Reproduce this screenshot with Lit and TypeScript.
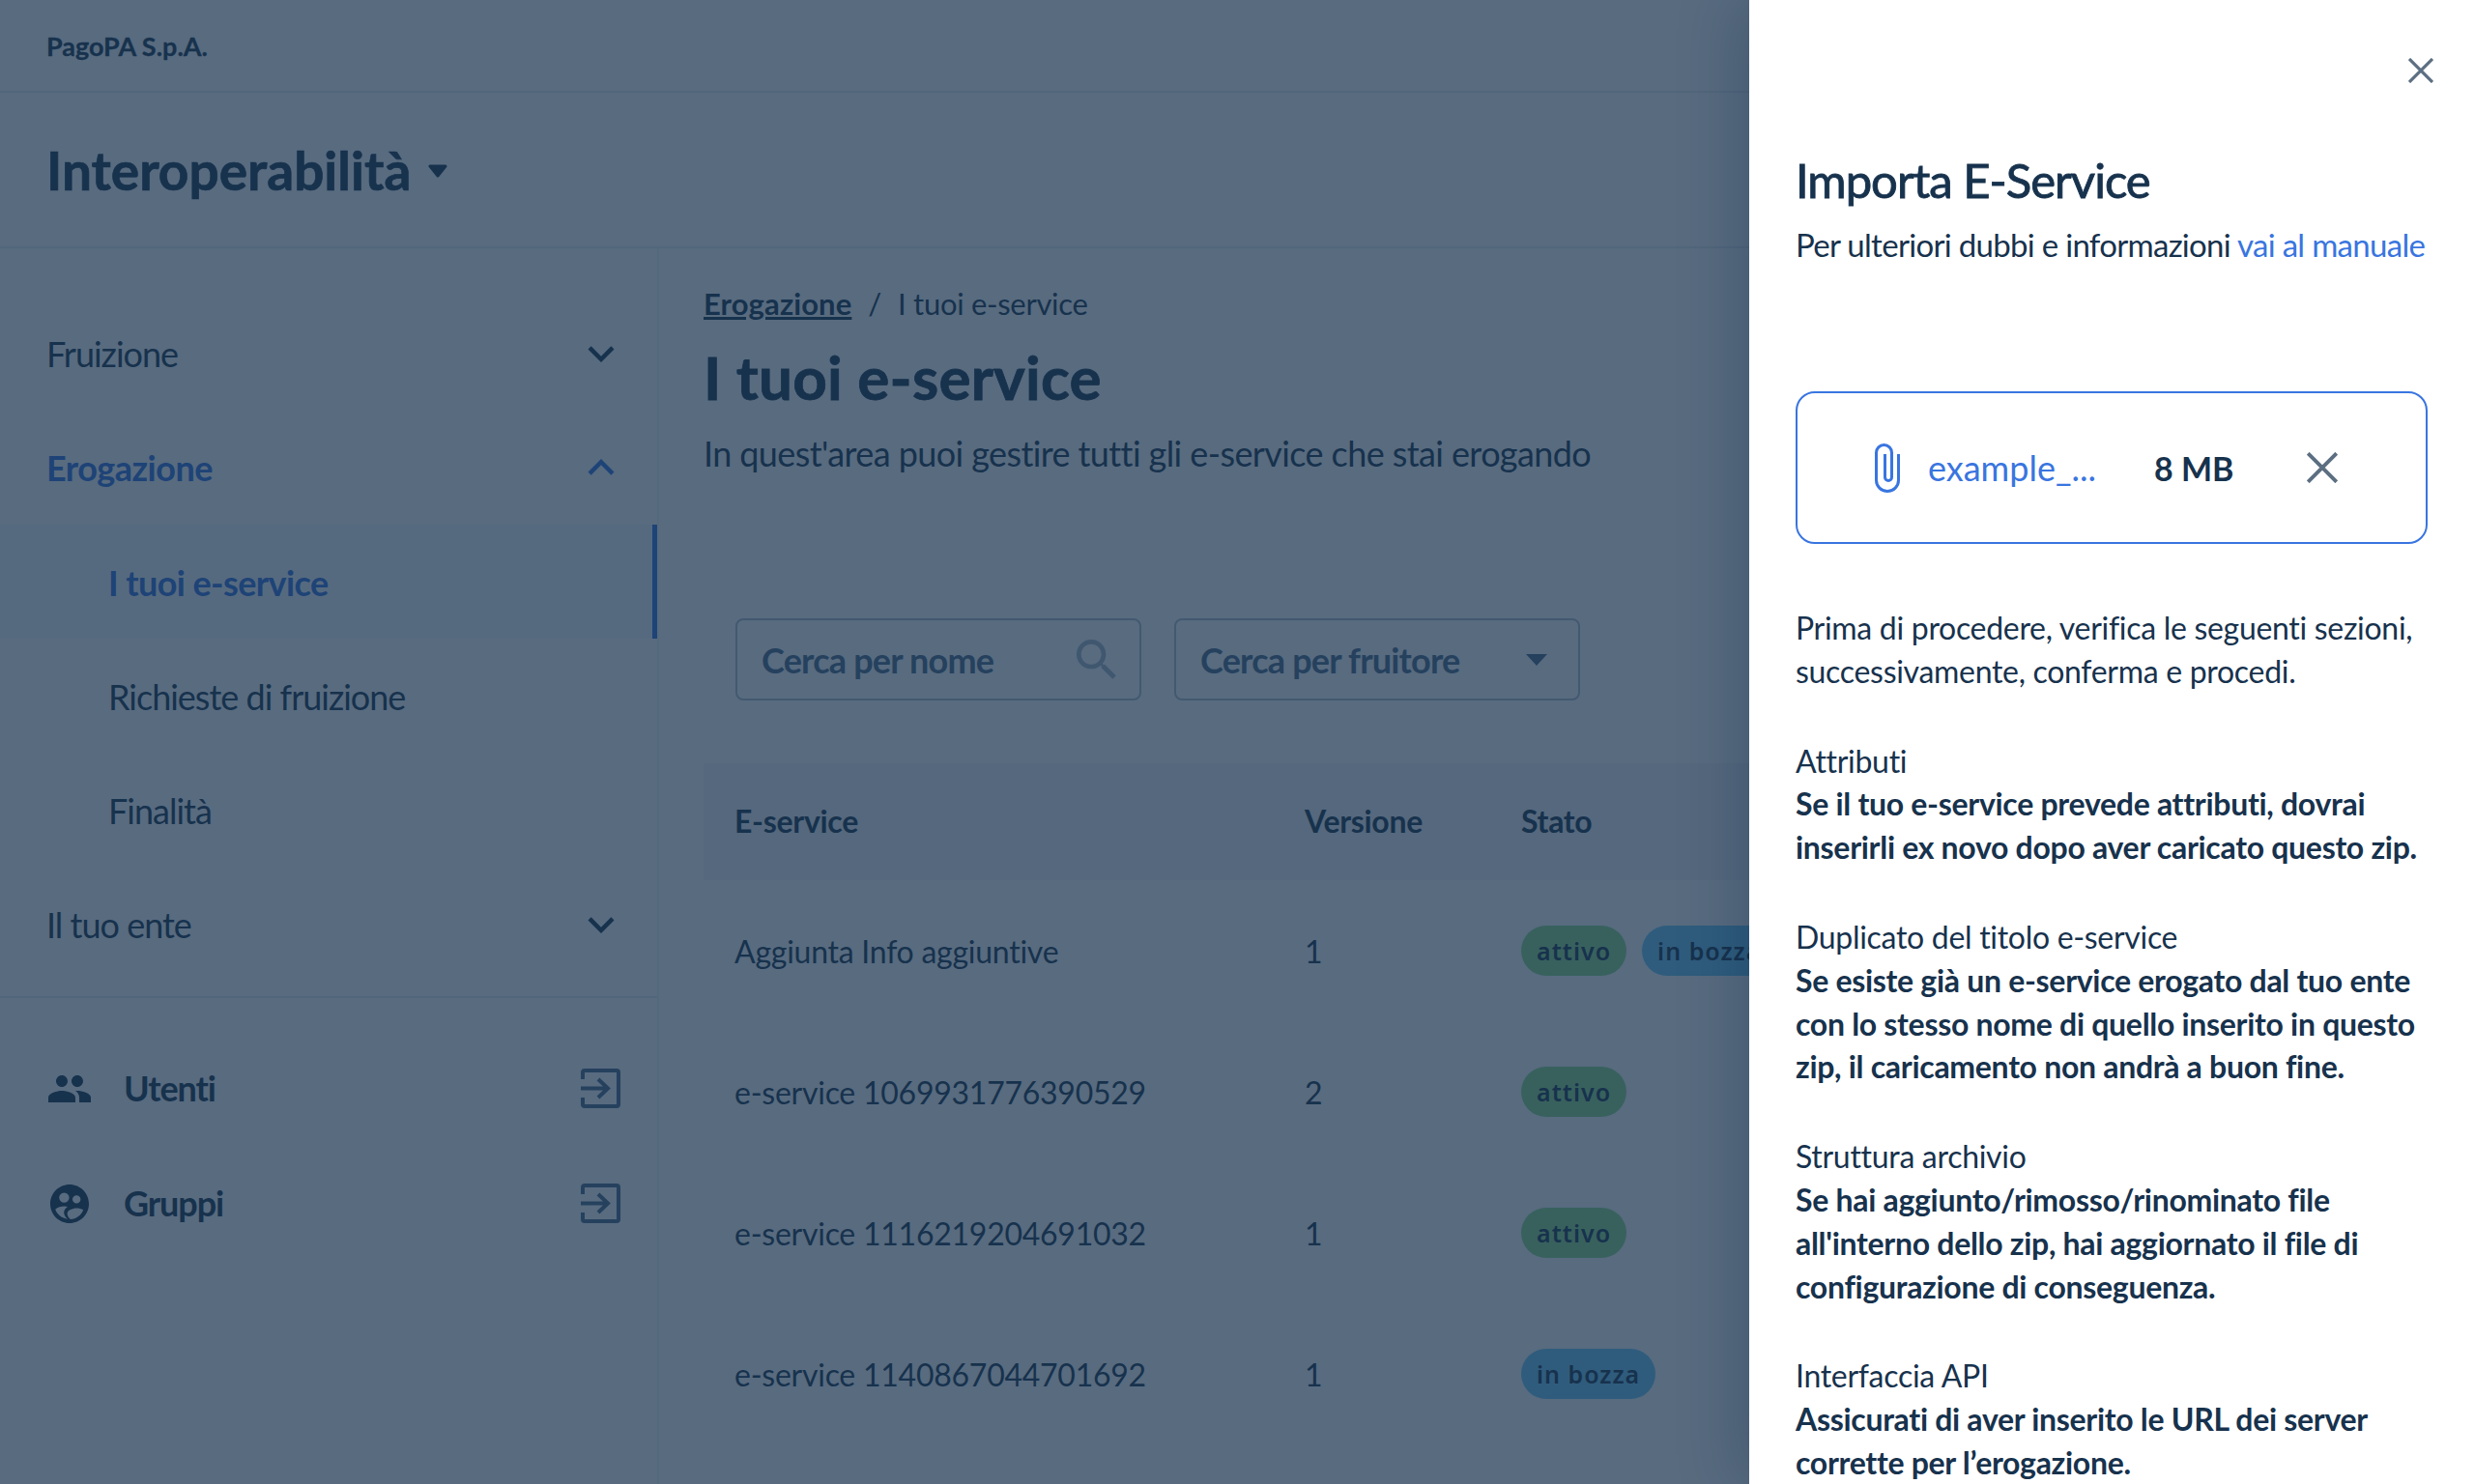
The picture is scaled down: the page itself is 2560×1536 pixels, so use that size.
import { LitElement, html, css } from "lit";
import { customElement } from "lit/decorators.js";

const chevron = (up: boolean) => html`<svg class="chev" viewBox="0 0 24 24"><path fill="currentColor" d=${up ? "M12 8l-6 6 1.41 1.41L12 10.83l4.59 4.58L18 14z" : "M16.59 8.59 12 13.17 7.41 8.59 6 10l6 6 6-6z"}></path></svg>`;
const exit = html`<svg class="exit" viewBox="0 0 41 41"><path fill="none" stroke="currentColor" stroke-width="4" d="M2 11V4q0-2 2-2h33q2 0 2 2v33q0 2-2 2H4q-2 0-2-2v-7M0 20.5h26M18 11l10 9.500L18 30"></path></svg>`;

@customElement("app-root")
export class AppRoot extends LitElement {
  static styles = css`
    :host { display: block; width: 2560px; height: 1536px; overflow: hidden; position: relative; background: #fff; color: #17324d; font-family: Lato, "Noto Sans", sans-serif; font-size: 36px; }
    * { box-sizing: border-box; }
    .top { height: 96px; padding: 0 48px; display: flex; align-items: center; border-bottom: 2px solid #e8ebf1; font-size: 27px; font-weight: 700; -webkit-text-stroke: .3px currentColor; }
    .product { height: 161px; padding: 0 48px; display: flex; align-items: center; gap: 18px; border-bottom: 2px solid #e8ebf1; font-size: 55px; font-weight: 700; -webkit-text-stroke: .7px currentColor; }
    .product svg { width: 20px; height: 14px; margin-top: 2px; }
    .body { display: flex; }
    .side { width: 680px; flex: none; padding-top: 50px; box-shadow: 2px 0 0 #f5f6f7; height: 1279px; }
    .row { height: 118px; display: flex; align-items: center; justify-content: space-between; padding: 0 31px 0 48px; font-weight: 400; font-size: 36px; letter-spacing: -1px; }
    .row.open { color: #2f6fe0; font-weight: 700; letter-spacing: -.5px; }
    .row.sub { padding-left: 112px; padding-top: 2px; }
    .row.low { padding-top: 2px; }
    .row.sel { background: rgba(57, 117, 224, 0.04); border-right: 5px solid #2f6fe0; color: #2f6fe0; font-weight: 700; letter-spacing: -.6px; }
    .chev { width: 54px; height: 54px; color: #17324d; }
    .open .chev { color: #2f6fe0; }
    .divider { margin: 16px 0 34px; height: 2px; background: #e8ebf1; }
    .ext { height: 119px; display: flex; align-items: center; padding: 0 38px 0 48px; font-weight: 700; font-size: 36px; letter-spacing: -1.1px; }
    .ext-icon { width: 48px; height: 48px; margin-right: 32px; flex: none; }
    .ext span { flex: 1; padding-bottom: 2px; }
    .exit { width: 41px; height: 41px; color: #4a6a8a; }
    .main { flex: 1; padding: 33px 0 0 48px; min-width: 0; }
    .crumbs { display: flex; gap: 17px; font-size: 31px; font-weight: 400; height: 48px; align-items: center; letter-spacing: -.3px; }
    .crumbs b { font-weight: 700; text-decoration: underline; letter-spacing: .1px; }
    h1 { margin: 12px 0 0; font-size: 62px; line-height: 80px; font-weight: 700; letter-spacing: .2px; -webkit-text-stroke: .8px currentColor; }
    .lead { margin: 12px 0 0; font-size: 36px; line-height: 54px; font-weight: 400; letter-spacing: -.6px; white-space: nowrap; }
    .filters { display: flex; gap: 34px; padding: 0 0 0 33px; margin-top: 144px; }
    .field { width: 420px; height: 85px; border: 2px solid #b4bec8; border-radius: 8px; padding: 0 25px; display: flex; align-items: center; justify-content: space-between; color: #4a6a8a; font-size: 36px; font-weight: 700; letter-spacing: -.8px; }
    .field svg { width: 56px; height: 56px; margin-right: -9px; color: #a8b8c8; flex: none; }
    .field i { width: 0; height: 0; border-left: 11px solid transparent; border-right: 11px solid transparent; border-top: 12px solid currentColor; margin-right: 7px; }
    .table { margin-top: 65px; width: 1200px; }
    .tr { display: flex; align-items: center; padding-left: 32px; height: 146px; font-size: 32px; font-weight: 400; letter-spacing: -.25px; }
    .tr.head { height: 121px; padding-bottom: 2px; background: #f2f4f6; font-weight: 700; letter-spacing: -.3px; }
    .c1 { width: 590px; } .c2 { width: 224px; }
    .chips { display: flex; gap: 16px; white-space: nowrap; }
    .chip { height: 52px; border-radius: 26px; padding: 0 16px; display: flex; align-items: center; font: 600 25px "Noto Sans", sans-serif; letter-spacing: 1px; }
    .chip.g { background: #8cdc89; } .chip.b { background: #6ec8f7; }
    .scrim { position: absolute; inset: 0; background: rgba(23, 50, 77, 0.72); }
    .drawer { position: absolute; top: 0; right: 0; bottom: 0; width: 750px; background: #fff; box-shadow: -8px 0 60px rgba(0,33,66,.25); padding: 0 48px; overflow: hidden; }
    .close { display: flex; justify-content: flex-end; padding-top: 60px; height: 137px; margin-right: -6px; }
    .close svg { width: 26px; height: 26px; color: #5c6f82; }
    h2 { margin: 17px 0 0; font-size: 49px; line-height: 64px; font-weight: 400; letter-spacing: -1px; -webkit-text-stroke: .9px currentColor; }
    .sub2 { margin: 9px 0 0; font-size: 33px; line-height: 52px; font-weight: 400; letter-spacing: -.7px; white-space: nowrap; }
    a { color: #3975e0; text-decoration: none; }
    .file { margin-top: 126px; height: 158px; width: 654px; border: 2px solid #3975e0; border-radius: 20px; display: flex; align-items: center; padding: 0 0 0 80px; }
    .clip { width: 26px; height: 51px; color: #3975e0; margin-right: 29px; flex: none; }
    .fname { width: 234px; color: #3975e0; font-weight: 400; font-size: 36px; }
    .size { width: 158px; font-weight: 700; font-size: 34px; }
    .fx { color: #5c6f82; }
    .fx svg { width: 32px; height: 32px; display: block; }
    .text { margin-top: 65px; font-size: 32px; line-height: 44.8px; letter-spacing: -.3px; }
    .text p { margin: 0 0 48px; font-weight: 400; }
    .text b { font-weight: 700; display: block; }
  `;
  render() {
    const x = html`<svg viewBox="0 0 26 26"><path fill="none" stroke="currentColor" stroke-width="3.2" d="M1 1l24 24M25 1L1 25"></path></svg>`;
    return html`
      <div class="top">PagoPA S.p.A.</div>
      <div class="product">Interoperabilità <svg viewBox="0 0 20 14"><path fill="currentColor" stroke="currentColor" stroke-width="3" stroke-linejoin="round" d="M2 2h16l-8 10z"></path></svg></div>
      <div class="body">
        <nav class="side">
          <div class="row">Fruizione ${chevron(false)}</div>
          <div class="row open">Erogazione ${chevron(true)}</div>
          <div class="row sub sel">I tuoi e-service</div>
          <div class="row sub">Richieste di fruizione</div>
          <div class="row sub">Finalità</div>
          <div class="row low">Il tuo ente ${chevron(false)}</div>
          <div class="divider"></div>
          <div class="ext"><svg class="ext-icon" viewBox="0 0 24 24"><path fill="currentColor" d="M16 11c1.66 0 2.99-1.34 2.99-3S17.66 5 16 5s-3 1.34-3 3 1.34 3 3 3zm-8 0c1.66 0 2.99-1.34 2.99-3S9.66 5 8 5 5 6.34 5 8s1.34 3 3 3zm0 2c-2.33 0-7 1.17-7 3.500V19h14v-2.500c0-2.33-4.670-3.500-7-3.500zm8 0c-.29 0-.62.02-.97.05 1.16.84 1.970 1.970 1.970 3.450V19h6v-2.500c0-2.330-4.670-3.500-7-3.500z"></path></svg><span>Utenti</span>${exit}</div>
          <div class="ext"><svg class="ext-icon" viewBox="0 0 24 24"><path fill="currentColor" fill-rule="evenodd" d="M12 2C6.480 2 2 6.480 2 12s4.480 10 10 10 10-4.480 10-10S17.520 2 12 2zm3.600 5.600a2.100 2.100 0 1 1 0 4.200 2.100 2.100 0 0 1 0-4.200zM9.200 6.200a2.600 2.600 0 1 1 0 5.200 2.600 2.600 0 0 1 0-5.200zm1.800 13.700c-3-.4-5.400-2.300-6.400-5 1.200-1 3.100-1.600 4.600-1.600.5 0 1.100.1 1.800.2-1.200.8-1.900 1.900-1.900 3 0 1.200.7 2.500 1.900 3.400zm1.500.1c-1.100-.8-1.700-2-1.700-3 0-1.700 2.800-2.800 4.800-2.800 1.100 0 2.600.3 3.500.9-1 2.800-3.600 4.700-6.600 4.900z"></path></svg><span>Gruppi</span>${exit}</div>
        </nav>
        <main class="main">
          <div class="crumbs"><b>Erogazione</b><span>/</span><span>I tuoi e-service</span></div>
          <h1>I tuoi e-service</h1>
          <p class="lead">In quest'area puoi gestire tutti gli e-service che stai erogando</p>
          <div class="filters">
            <div class="field">Cerca per nome <svg viewBox="0 0 24 24"><path fill="currentColor" d="M15.500 14h-.79l-.28-.27A6.470 6.470 0 0 0 16 9.500 6.500 6.500 0 1 0 9.500 16c1.610 0 3.090-.59 4.230-1.570l.27.28v.79l5 4.990L20.490 19l-4.990-5zm-6 0C7.010 14 5 11.990 5 9.500S7.010 5 9.500 5 14 7.010 14 9.500 11.990 14 9.500 14z"></path></svg></div>
            <div class="field">Cerca per fruitore <i></i></div>
          </div>
          <div class="table">
            <div class="tr head"><div class="c1">E-service</div><div class="c2">Versione</div><div>Stato</div></div>
            ${[
              ["Aggiunta Info aggiuntive", "1", ["g", "b"]],
              ["e-service 1069931776390529", "2", ["g"]],
              ["e-service 1116219204691032", "1", ["g"]],
              ["e-service 1140867044701692", "1", ["b"]],
            ].map(([n, v, c]) => html`<div class="tr"><div class="c1">${n}</div><div class="c2">${v}</div><div class="chips">${(c as string[]).map((k) => html`<span class="chip ${k}">${k === "g" ? "attivo" : "in bozza"}</span>`)}</div></div>`)}
          </div>
        </main>
      </div>
      <div class="scrim"></div>
      <aside class="drawer">
        <div class="close">${x}</div>
        <h2>Importa E-Service</h2>
        <p class="sub2">Per ulteriori dubbi e informazioni <a>vai al manuale</a></p>
        <div class="file">
          <svg class="clip" viewBox="0 0 26 51"><path fill="none" stroke="currentColor" stroke-width="3" d="M24.500 11V38a11.500 11.500 0 0 1-23 0V9.500a8 8 0 0 1 16 0V35a3.500 3.500 0 0 1-7 0V11"></path></svg>
          <div class="fname">example_...</div>
          <div class="size">8 MB</div>
          <div class="fx">${x}</div>
        </div>
        <div class="text">
          <p>Prima di procedere, verifica le seguenti sezioni, successivamente, conferma e procedi.</p>
          <p>Attributi<b>Se il tuo e-service prevede attributi, dovrai inserirli ex novo dopo aver caricato questo zip.</b></p>
          <p>Duplicato del titolo e-service<b>Se esiste già un e-service erogato dal tuo ente con lo stesso nome di quello inserito in questo zip, il caricamento non andrà a buon fine.</b></p>
          <p>Struttura archivio<b>Se hai aggiunto/rimosso/rinominato file all'interno dello zip, hai aggiornato il file di configurazione di conseguenza.</b></p>
          <p>Interfaccia API<b>Assicurati di aver inserito le URL dei server corrette per l’erogazione.</b></p>
        </div>
      </aside>
    `;
  }
}
